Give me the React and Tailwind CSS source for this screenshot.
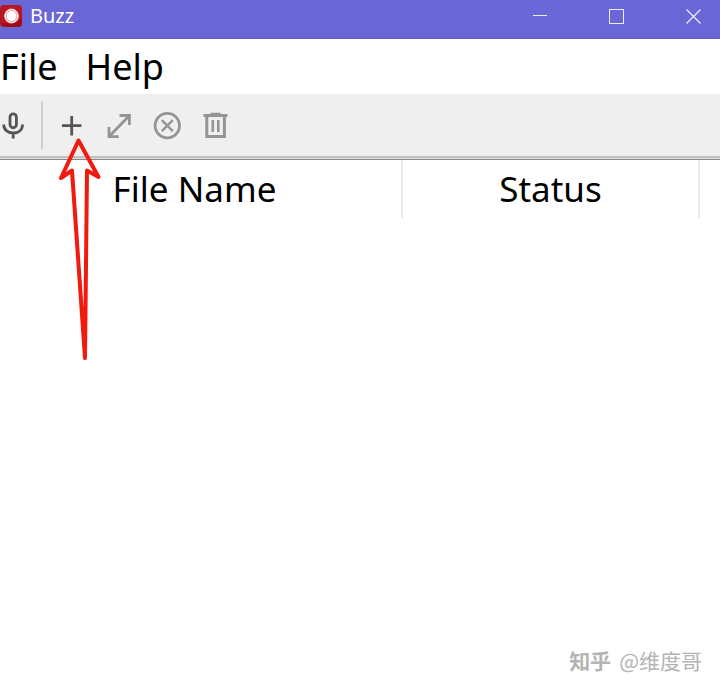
function AppIcon() {
  return (
    <svg className="h-[22px] w-[22px]" viewBox="0 0 22 22" aria-hidden="true">
      <rect x="0" y="0" width="22" height="22" rx="4" fill="#b81622" />
      <path d="M1 18C3 21 6 22 11 22H18C21 22 22 20 22 17V12C20 18 12 20 1 18Z" fill="#9a0c16" />
      <circle cx="11.5" cy="11" r="7.4" fill="#e9a3a6" />
      <circle cx="11.5" cy="11" r="6.4" fill="none" stroke="#ffffff" strokeWidth="1" />
      <circle cx="11.5" cy="11" r="5" fill="#ffffff" />
    </svg>
  );
}

function TitleBar() {
  return (
    <header className="flex h-[39px] items-start justify-between border-b border-[#6461c4] bg-[#6966d6] text-white">
      <div className="flex h-8 items-center gap-2">
        <AppIcon />
        <h1 className="text-[20px] leading-8">Buzz</h1>
      </div>
      <div className="flex h-8">
        <button type="button" aria-label="Minimize" className="flex w-[76px] items-center justify-center">
          <svg width="14" height="14" viewBox="0 0 14 14" stroke="#ececff" fill="none">
            <path d="M0 6.5H14" />
          </svg>
        </button>
        <button type="button" aria-label="Maximize" className="flex w-[77px] items-center justify-center">
          <svg width="15" height="15" viewBox="0 0 15 15" stroke="#ececff" fill="none">
            <rect x="0.5" y="0.5" width="14" height="14" />
          </svg>
        </button>
        <button type="button" aria-label="Close" className="flex w-[65px] items-center justify-center pl-3">
          <svg width="15" height="15" viewBox="0 0 15 15" stroke="#ececff" strokeWidth="1.3" fill="none">
            <path d="M0.5 0.5L14.5 14.5M14.5 0.5L0.5 14.5" />
          </svg>
        </button>
      </div>
    </header>
  );
}

function MenuBar() {
  return (
    <nav className="flex h-[55px] items-center gap-7 bg-white">
      <button type="button" className="text-[36px] leading-[54px]">File</button>
      <button type="button" className="text-[36px] leading-[54px]">Help</button>
    </nav>
  );
}

function ToolButton({ label, disabled, children }) {
  return (
    <button
      type="button"
      aria-label={label}
      disabled={disabled}
      className="flex h-12 w-12 items-center justify-center text-[#555555] disabled:text-[#949494]"
    >
      <svg width="30" height="30" viewBox="0 0 30 30" fill="none" stroke="currentColor" strokeWidth="2.8">
        {children}
      </svg>
    </button>
  );
}

function Toolbar() {
  return (
    <div role="toolbar" className="relative flex h-[62px] items-center bg-[#efefef]">
      <div className="-ml-[11px]">
        <ToolButton label="Record">
          <rect x="12" y="3.8" width="6.4" height="14" rx="3.2" />
          <path d="M5.7 14.5C5.7 19.5 9.5 23 15.2 23S24.5 19.5 24.5 14.5M15.2 23V28.5" />
        </ToolButton>
      </div>
      <div className="mr-1 ml-1 h-12 w-[2px] bg-[#cecece]" />
      <ToolButton label="New transcription">
        <path d="M15.7 6V25.4M6 15.7H25.4" />
      </ToolButton>
      <ToolButton label="Open transcript" disabled>
        <path d="M5 26.5L25.5 5.5M15.5 5.5H25.4V15M5 17V26.7H14.5" />
      </ToolButton>
      <ToolButton label="Cancel transcription" disabled>
        <circle cx="15.3" cy="15.6" r="12.2" />
        <path d="M9.8 10.1L20.8 21.1M20.8 10.1L9.8 21.1" strokeWidth="2.4" />
      </ToolButton>
      <ToolButton label="Clear history" disabled>
        <path d="M3.5 5.5H27.5M10.5 4.2H20.5M6.8 5.5V26.5H24.4V5.5" strokeWidth="3" />
        <path d="M12.8 10V22M18.3 10V22" strokeWidth="2.6" />
      </ToolButton>
      <svg
        className="pointer-events-none absolute top-[43px] left-[56px]"
        width="48"
        height="224"
        viewBox="0 0 48 224"
        fill="none"
        stroke="#f01a0e"
        strokeWidth="4"
        strokeLinejoin="round"
        aria-hidden="true"
      >
        <path d="M22.5 3.5L5 41L16 33.5L29 221L31 33.5L42.5 40Z" />
      </svg>
    </div>
  );
}

function TaskTable() {
  return (
    <table className="w-full table-fixed border-collapse">
      <thead>
        <tr className="h-[58px]">
          <th scope="col" className="w-[402px] border-r-2 border-[#ebebeb] p-0 pr-3 text-[35px] leading-[58px] font-normal">
            File Name
          </th>
          <th scope="col" className="w-[297px] border-r-2 border-[#ebebeb] p-0 text-[35px] leading-[58px] font-normal">
            Status
          </th>
          <td className="p-0" />
        </tr>
      </thead>
      <tbody />
    </table>
  );
}

export default function App() {
  return (
    <div className="relative flex min-h-screen flex-col overflow-hidden bg-white font-['Noto_Sans','Noto_Sans_CJK_SC',sans-serif] text-black">
      <TitleBar />
      <MenuBar />
      <Toolbar />
      <div className="h-[3px] border-t-2 border-[#c0c0c0] bg-[#dedede]" />
      <main className="flex-1 border-t border-[#888888]">
        <TaskTable />
      </main>
      <p className="absolute right-[18px] bottom-4 flex gap-2 font-['Noto_Sans_CJK_SC',sans-serif] text-[21px] leading-[30px] text-[#b4b4b4]">
        <span className="font-bold">知乎</span>
        <span>@维度哥</span>
      </p>
    </div>
  );
}
